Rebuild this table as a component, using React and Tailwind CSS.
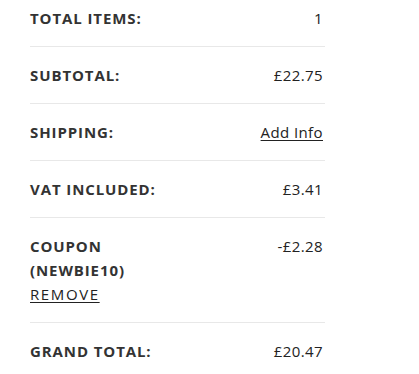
import React from "react";

const rows = [
    { label: "TOTAL ITEMS:", value: "1" },
    { label: "SUBTOTAL:", value: "£22.75" },
    { label: "SHIPPING:", value: "Add Info", link: true },
    { label: "VAT INCLUDED:", value: "£3.41" },
];

const Summary = () => {
    return (
        <div className="min-h-screen bg-white overflow-hidden">
            <div
                className="ml-[30px] w-[295px] -mt-[10px] text-[15px] leading-6"
                style={{ fontFamily: '"Open Sans", "Liberation Sans", sans-serif' }}
            >
                {rows.map((row) => (
                    <div
                        key={row.label}
                        className="flex items-start justify-between py-4 border-b border-[#e8e8e8]"
                    >
                        <span className="font-bold text-[#333] tracking-[0.9px]">{row.label}</span>
                        <span
                            className={`pr-[2px] text-[#222] tracking-[0.4px] ${row.link ? "underline underline-offset-2" : ""}`}
                        >
                            {row.value}
                        </span>
                    </div>
                ))}

                {/* Coupon row */}
                <div className="flex items-start justify-between py-4 border-b border-[#e8e8e8]">
                    <div className="flex flex-col items-start">
                        <span className="font-bold text-[#333] tracking-[0.9px]">COUPON</span>
                        <span className="font-bold text-[#333] tracking-[0.9px]">(NEWBIE10)</span>
                        <span className="text-[#222] underline underline-offset-2 tracking-[1.6px]">REMOVE</span>
                    </div>
                    <span className="pr-[2px] text-[#222] tracking-[0.4px]">-£2.28</span>
                </div>

                <div className="flex items-start justify-between py-4">
                    <span className="font-bold text-[#333] tracking-[0.9px]">GRAND TOTAL:</span>
                    <span className="pr-[2px] text-[#222] tracking-[0.4px]">£20.47</span>
                </div>
            </div>
        </div>
    );
};

export default function App() {
    return <Summary />;
}
